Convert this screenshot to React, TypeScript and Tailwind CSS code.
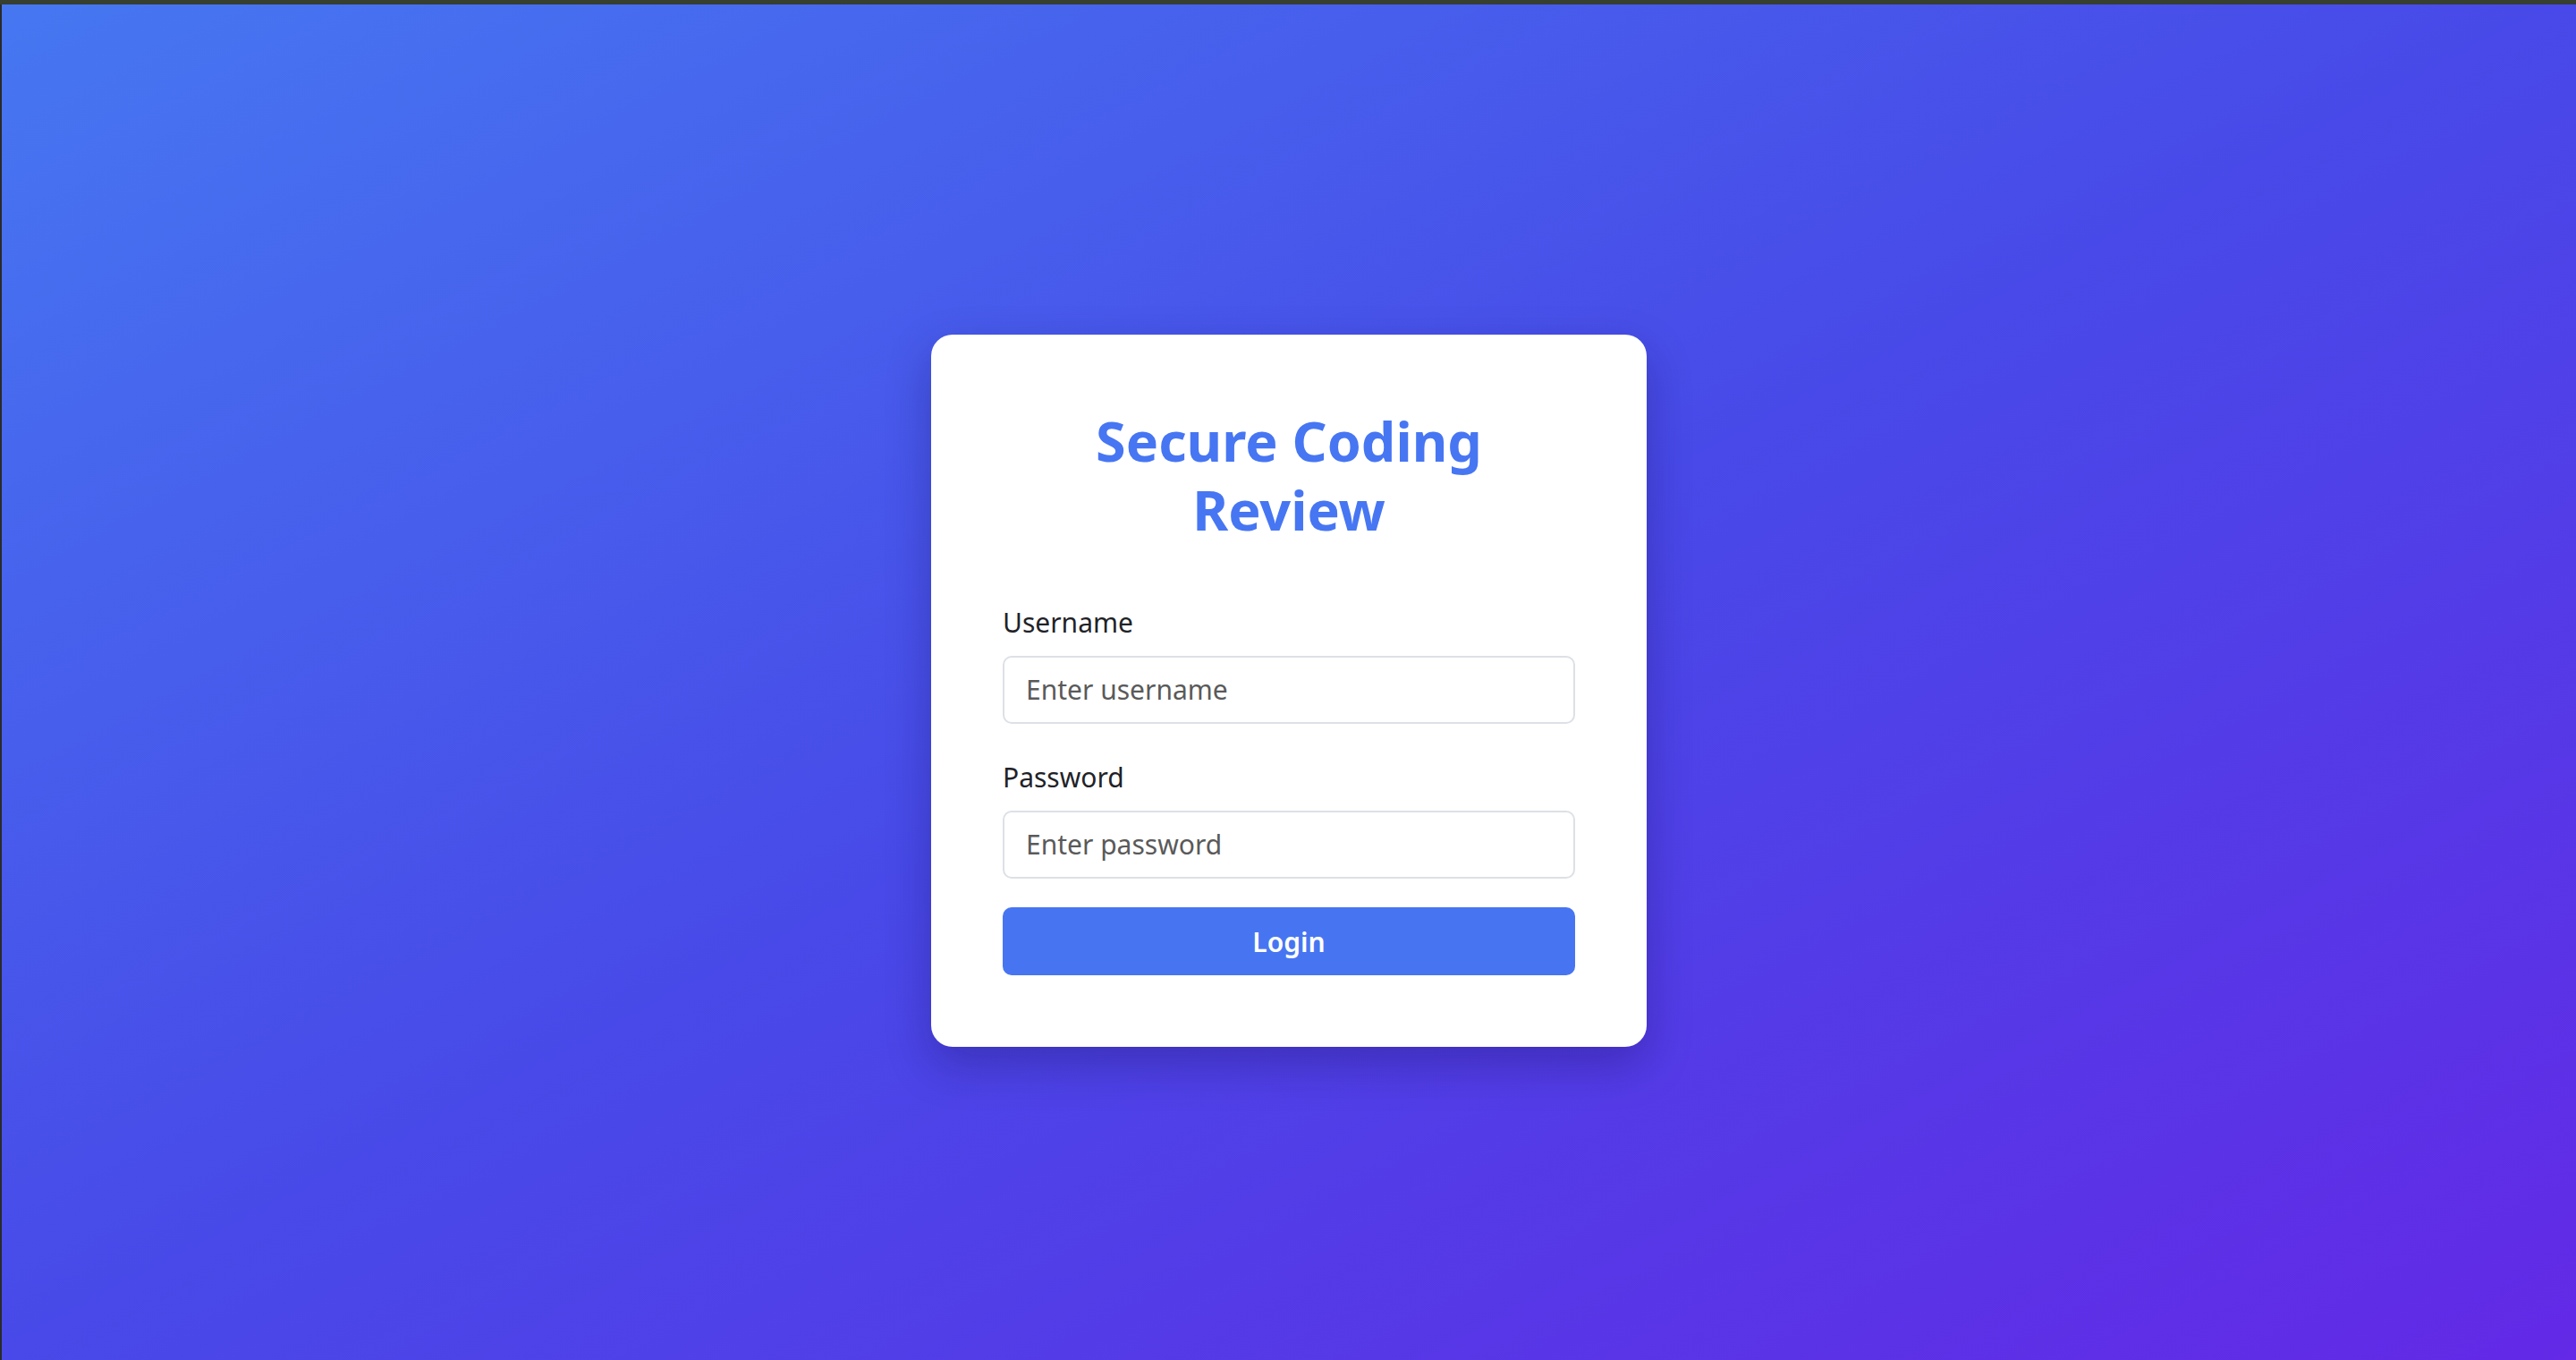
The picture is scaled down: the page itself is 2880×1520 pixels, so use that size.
import React from 'react'

const Field = ({ label, type, placeholder }: { label: string; type: string; placeholder: string }) => {
  return (
    <div className="flex flex-col">
      <label className="text-[30px] leading-[58px] text-[#1f2328]">{label}</label>
      <input
        type={type}
        placeholder={placeholder}
        className="mt-[8px] h-[76px] w-full rounded-[10px] border-2 border-[#dde0e5] bg-white px-6 text-[30px] text-[#1f2328] outline-none placeholder:text-[#5a5a5a]"
      />
    </div>
  )
}

const App = () => {
  return (
    <div className="flex h-screen flex-col bg-[#2b2b2b] font-['Noto_Sans',sans-serif]">
      <div className="h-[5px] bg-[#363f30]" />
      <div className="flex flex-1 items-center justify-center border-l-2 border-[#2a2a2a] bg-[linear-gradient(to_bottom_right,#4677f1_0%,#4849e8_50%,#6329e6_100%)] pt-[18px]">
        <div className="w-[800px] rounded-3xl bg-white p-20 shadow-[0_20px_50px_rgba(20,10,80,0.3)]">
          <h1 className="mb-[59px] text-center text-[61px] font-bold leading-[77px] text-[#4776f3]">
            Secure Coding
            <br />
            Review
          </h1>
          <form className="flex flex-col" onSubmit={(e) => e.preventDefault()}>
            <Field label="Username" type="text" placeholder="Enter username" />
            <div className="mt-[31px]">
              <Field label="Password" type="password" placeholder="Enter password" />
            </div>
            <button
              type="submit"
              className="mt-[32px] h-[76px] w-full rounded-[10px] bg-[#4775f2] pt-[2px] text-[30px] font-semibold text-white"
            >
              Login
            </button>
          </form>
        </div>
      </div>
    </div>
  )
}

export default App
